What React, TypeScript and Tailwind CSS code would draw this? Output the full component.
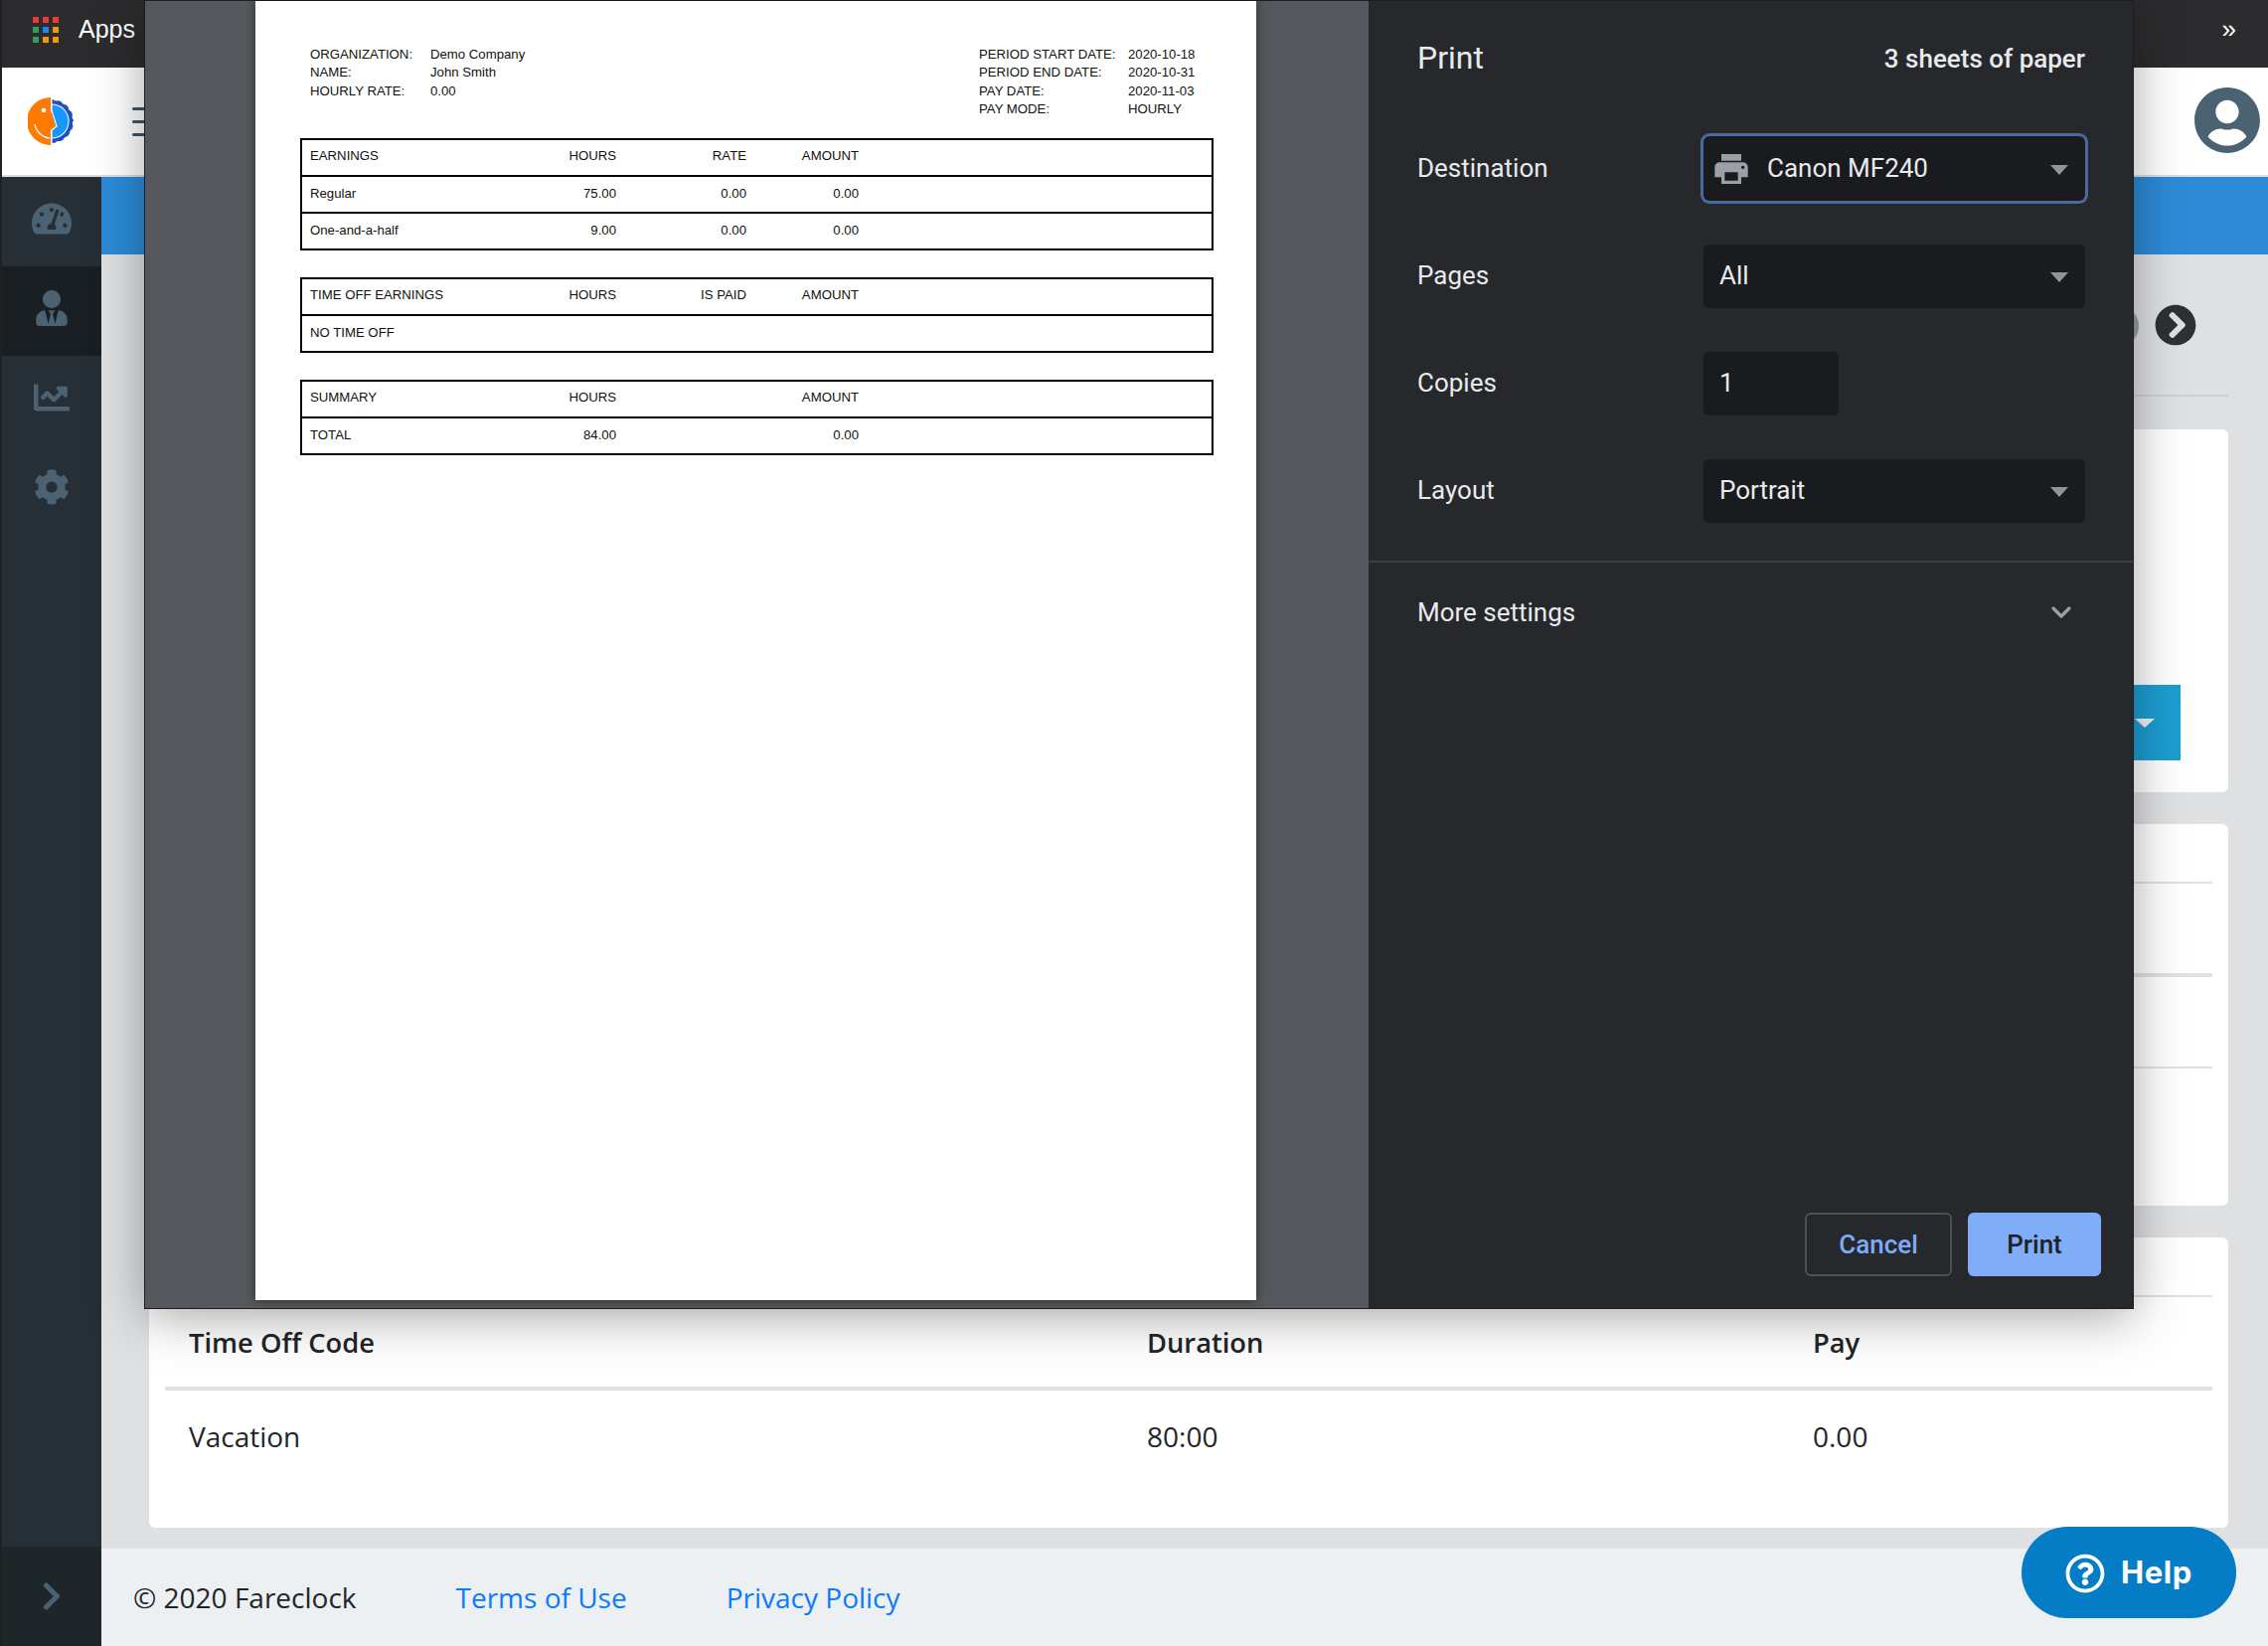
import React from "react";
import { FaTachometerAlt, FaUserTie, FaChartLine, FaCog, FaChevronRight, FaChevronLeft, FaChevronCircleRight, FaUserCircle, FaRegQuestionCircle } from "react-icons/fa";
import { MdPrint } from "react-icons/md";
import { ChevronDown } from "lucide-react";

const gridColors = ["bg-[#ee3a35]", "bg-[#ee3a35]", "bg-[#ee3a35]", "bg-[#2f9e5b]", "bg-[#1a87f0]", "bg-[#f29900]", "bg-[#2f9e5b]", "bg-[#f29900]", "bg-[#f29900]"];

function Logo() {
  return (
    <svg width="48" height="48" viewBox="0 0 48 48">
      <defs>
        <clipPath id="rightHalf"><rect x="24" y="0" width="25" height="48" /></clipPath>
      </defs>
      <g clipPath="url(#rightHalf)">
        <circle cx="24" cy="24" r="22" fill="#1f4fc4" />
        <circle cx="24" cy="24" r="22.6" fill="none" stroke="#ffffff" strokeWidth="3" strokeDasharray="4 5" />
        <circle cx="24" cy="24" r="17.6" fill="#ffffff" />
        <circle cx="24" cy="24" r="16.6" fill="#1a96ff" />
      </g>
      <path d="M23 0A24 24 0 0 0 23 48V33L28 29L23 13Z" fill="#ff7a00" />
      <path d="M24 0V13L29 29L24 33V48" fill="none" stroke="#ffffff" strokeWidth="1.1" />
      <path d="M7 27A17 17 0 0 0 22 41" fill="none" stroke="#ffffff" strokeWidth="1.4" />
      <circle cx="16" cy="13" r="2.3" fill="#ffffff" />
    </svg>
  );
}

function SideItem({ icon, active }: { icon: React.ReactNode; active?: boolean }) {
  return (
    <div className={`h-[90px] pb-[6px] flex items-center justify-center text-[#4b6273] ${active ? "bg-[#1a1f23]" : ""}`}>{icon}</div>
  );
}

function Row({ cells }: { cells: string[] }) {
  return (
    <div className="grid grid-cols-[200px_108px_131px_113px] items-center h-[35px] pl-2 pb-[2px] border-black [&+&]:border-t-2 [&+&]:h-[37px] [&+&]:pb-0">
      <span>{cells[0]}</span>
      <span className="text-right">{cells[1]}</span>
      <span className="text-right">{cells[2]}</span>
      <span className="text-right">{cells[3]}</span>
    </div>
  );
}

function PaperTable({ rows, className }: { rows: string[][]; className?: string }) {
  return (
    <div className={`border-2 border-black ${className ?? ""}`}>
      {rows.map((r, i) => (
        <Row key={i} cells={r} />
      ))}
    </div>
  );
}

function Caret() {
  return <span className="ml-auto mr-[1px] mt-[2px] w-0 h-0 border-x-[9px] border-x-transparent border-t-[10px] border-t-[#8f9499]" />;
}

function SettingRow({ label, children }: { label: string; children: React.ReactNode }) {
  return (
    <div className="h-[108px] flex items-center">
      <span className="w-[288px] text-[26px]">{label}</span>
      {children}
    </div>
  );
}

export default function App() {
  return (
    <div className="relative w-[2282px] h-[1656px] overflow-hidden bg-[#1f2022] pl-[2px] flex flex-col font-['Open_Sans',sans-serif] text-[#212529]">
      {/* browser bookmarks bar */}
      <div className="h-[68px] shrink-0 bg-[#2c2c2e] flex items-center pl-[31px] pr-[32px] pb-[8px] text-white">
        <div className="grid grid-cols-3 gap-1 w-[26px]">
          {gridColors.map((c, i) => (
            <span key={i} className={`w-[6px] h-[6px] ${c}`} />
          ))}
        </div>
        <span className="ml-[20px] text-[25px] font-['Liberation_Sans',sans-serif]">Apps</span>
        <span className="ml-auto text-[26px] leading-none font-['Liberation_Sans',sans-serif] -mt-[2px]">»</span>
      </div>

      {/* app header */}
      <div className="h-[110px] shrink-0 bg-white border-b-2 border-[#dcdee1] flex items-center pl-[26px] pr-[7px]">
        <Logo />
        <div className="ml-[57px] flex flex-col gap-[10px]">
          <span className="block w-[28px] h-[3px] rounded bg-[#3f5565]" />
          <span className="block w-[28px] h-[3px] rounded bg-[#3f5565]" />
          <span className="block w-[28px] h-[3px] rounded bg-[#3f5565]" />
        </div>
        <FaUserCircle className="ml-auto mb-[2px] text-[#4b6273]" size={68} />
      </div>

      <div className="flex-1 flex min-h-0">
        {/* sidebar */}
        <div className="w-[100px] shrink-0 bg-[#262e36] flex flex-col">
          <SideItem icon={<FaTachometerAlt size={40} />} />
          <SideItem active icon={<FaUserTie size={36} />} />
          <SideItem icon={<FaChartLine size={36} />} />
          <SideItem icon={<FaCog size={36} />} />
          <div className="mt-auto h-[100px] bg-[#1f2629] flex items-center justify-center text-[#4b6273]">
            <FaChevronRight size={32} />
          </div>
        </div>

        {/* main */}
        <div className="flex-1 min-w-0 flex flex-col bg-[#dfe0e2]">
          <div className="h-[78px] shrink-0 bg-[#2d8bd8]" />
          <div className="flex-1 min-h-0 pl-[48px] pr-[40px] flex flex-col">
            <div className="h-[143px] shrink-0 border-b-2 border-[#cfd1d3] flex items-center justify-end gap-[16px] pr-[32px] pt-[2px] mb-[33px]">
              <span className="w-[42px] h-[42px] rounded-full bg-[#9b9c9e] flex items-center justify-center text-white"><FaChevronLeft size={20} /></span>
              <FaChevronCircleRight size={42} className="text-[#2f3033] -mt-[2px]" />
            </div>
            <div className="h-[365px] shrink-0 bg-white rounded-md flex items-end justify-end pr-[48px] pb-[32px]">
              <div className="w-[200px] h-[76px] bg-[#1b9ed2] flex items-center justify-end pr-[26px]">
                <span className="w-0 h-0 border-x-[10px] border-x-transparent border-t-[9px] border-t-[#f2f2f2]" />
              </div>
            </div>
            <div className="mt-[32px] h-[384px] shrink-0 bg-white rounded-md px-4">
              <div className="h-[60px] border-b-2 border-[#dee2e6]" />
              <div className="h-[94px] border-b-4 border-[#dee2e6]" />
              <div className="h-[92px] border-b-2 border-[#dee2e6]" />
            </div>
            <div className="mt-[32px] h-[292px] shrink-0 bg-white rounded-md px-4">
              <div className="h-[60px] border-b-2 border-[#dee2e6]" />
              <div className="h-[94px] border-b-4 border-[#dee2e6] grid grid-cols-[964px_670px_1fr] items-center pl-[24px] pt-[3px] text-[27.3px] font-semibold">
                <span>Time Off Code</span>
                <span>Duration</span>
                <span>Pay</span>
              </div>
              <div className="h-[92px] grid grid-cols-[964px_670px_1fr] items-center pl-[24px] text-[28px]">
                <span>Vacation</span>
                <span>80:00</span>
                <span>0.00</span>
              </div>
            </div>
          </div>
          <div className="h-[98px] shrink-0 bg-[#edf0f3] flex items-center pl-[32px] text-[28px]">
            <span>© 2020 Fareclock</span>
            <a className="ml-[100px] text-[#0a7bff]">Terms of Use</a>
            <a className="ml-[100px] text-[#0a7bff]">Privacy Policy</a>
          </div>
        </div>
      </div>

      {/* help bubble */}
      <div className="absolute left-[2034px] top-[1536px] w-[216px] h-[92px] rounded-[46px] bg-[#047dc6] text-white flex items-center pl-[44px] pt-[1px] gap-[16px] font-['Inter',sans-serif] font-bold text-[31px] tracking-[0.6px]">
        <FaRegQuestionCircle size={40} />
        <span>Help</span>
      </div>

      {/* print dialog */}
      <div className="absolute left-[145px] top-0 w-[2002px] h-[1317px] flex border border-[#1d1e20] shadow-[0_8px_48px_rgba(0,0,0,0.35)] font-['Roboto',sans-serif]">
        <div className="w-[1231px] shrink-0 bg-[#55585c] pl-[111px]">
          <div className="w-[1007px] h-[1307px] bg-white shadow-[0_0_10px_rgba(0,0,0,0.5)] pt-[45px] pl-[45px] pr-[43px] text-[13.2px] leading-[18.3px] text-[#111] font-['Liberation_Sans',sans-serif]">
            <div className="flex justify-between h-[74px] mb-[19px]">
              <div className="ml-[10px]">
                <div className="flex"><span className="w-[121px]">ORGANIZATION:</span><span>Demo Company</span></div>
                <div className="flex"><span className="w-[121px]">NAME:</span><span>John Smith</span></div>
                <div className="flex"><span className="w-[121px]">HOURLY RATE:</span><span>0.00</span></div>
              </div>
              <div className="w-[236px]">
                <div className="flex"><span className="w-[150px]">PERIOD START DATE:</span><span>2020-10-18</span></div>
                <div className="flex"><span className="w-[150px]">PERIOD END DATE:</span><span>2020-10-31</span></div>
                <div className="flex"><span className="w-[150px]">PAY DATE:</span><span>2020-11-03</span></div>
                <div className="flex"><span className="w-[150px]">PAY MODE:</span><span>HOURLY</span></div>
              </div>
            </div>
            <PaperTable
              rows={[
                ["EARNINGS", "HOURS", "RATE", "AMOUNT"],
                ["Regular", "75.00", "0.00", "0.00"],
                ["One-and-a-half", "9.00", "0.00", "0.00"],
              ]}
            />
            <PaperTable
              className="mt-[27px]"
              rows={[
                ["TIME OFF EARNINGS", "HOURS", "IS PAID", "AMOUNT"],
                ["NO TIME OFF", "", "", ""],
              ]}
            />
            <PaperTable
              className="mt-[27px]"
              rows={[
                ["SUMMARY", "HOURS", "", "AMOUNT"],
                ["TOTAL", "84.00", "", "0.00"],
              ]}
            />
          </div>
        </div>

        <div className="flex-1 bg-[#26282c] text-[#e8eaed] flex flex-col">
          <div className="h-[114px] shrink-0 pl-[49px] pr-[48px] flex items-start justify-between pt-[35px]">
            <span className="text-[32px] leading-[44px]">Print</span>
            <span className="text-[26px] leading-[44px] font-medium mt-[1px]">3 sheets of paper</span>
          </div>
          <div className="pl-[49px] pr-[48px] shrink-0">
            <SettingRow label="Destination">
              <div className="w-[384px] h-[65px] mt-[1px] rounded-md bg-[#1a1b1e] ring-[3px] ring-[#4a6a9f] flex items-center pl-[11px] pr-[16px] text-[26px]">
                <MdPrint size={40} className="text-[#9aa0a6] -ml-[3px]" />
                <span className="ml-[16px]">Canon MF240</span>
                <Caret />
              </div>
            </SettingRow>
            <SettingRow label="Pages">
              <div className="w-[384px] h-[64px] mt-[1px] rounded-md bg-[#1a1b1e] flex items-center px-4 text-[26px]">
                <span>All</span>
                <Caret />
              </div>
            </SettingRow>
            <SettingRow label="Copies">
              <div className="w-[136px] h-[64px] mt-[1px] rounded-md bg-[#1a1b1e] flex items-center px-4 text-[26px]">1</div>
            </SettingRow>
            <SettingRow label="Layout">
              <div className="w-[384px] h-[64px] mt-[1px] rounded-md bg-[#1a1b1e] flex items-center px-4 text-[26px]">
                <span>Portrait</span>
                <Caret />
              </div>
            </SettingRow>
          </div>
          <div className="mt-[17px] border-t-2 border-[#3c3e42] h-[102px] shrink-0 pl-[49px] pr-[56px] flex items-center justify-between text-[26px]">
            <span>More settings</span>
            <ChevronDown size={32} className="text-[#9aa0a6]" strokeWidth={2.4} />
          </div>
          <div className="mt-auto pr-[32px] pb-[32px] flex justify-end gap-[16px] text-[26px] font-medium">
            <div className="w-[148px] h-[64px] rounded-md border-2 border-[#4d4f52] text-[#7cacf8] flex items-center justify-center">Cancel</div>
            <div className="w-[134px] h-[64px] rounded-md bg-[#7fadf7] text-[#202124] flex items-center justify-center">Print</div>
          </div>
        </div>
      </div>
    </div>
  );
}
